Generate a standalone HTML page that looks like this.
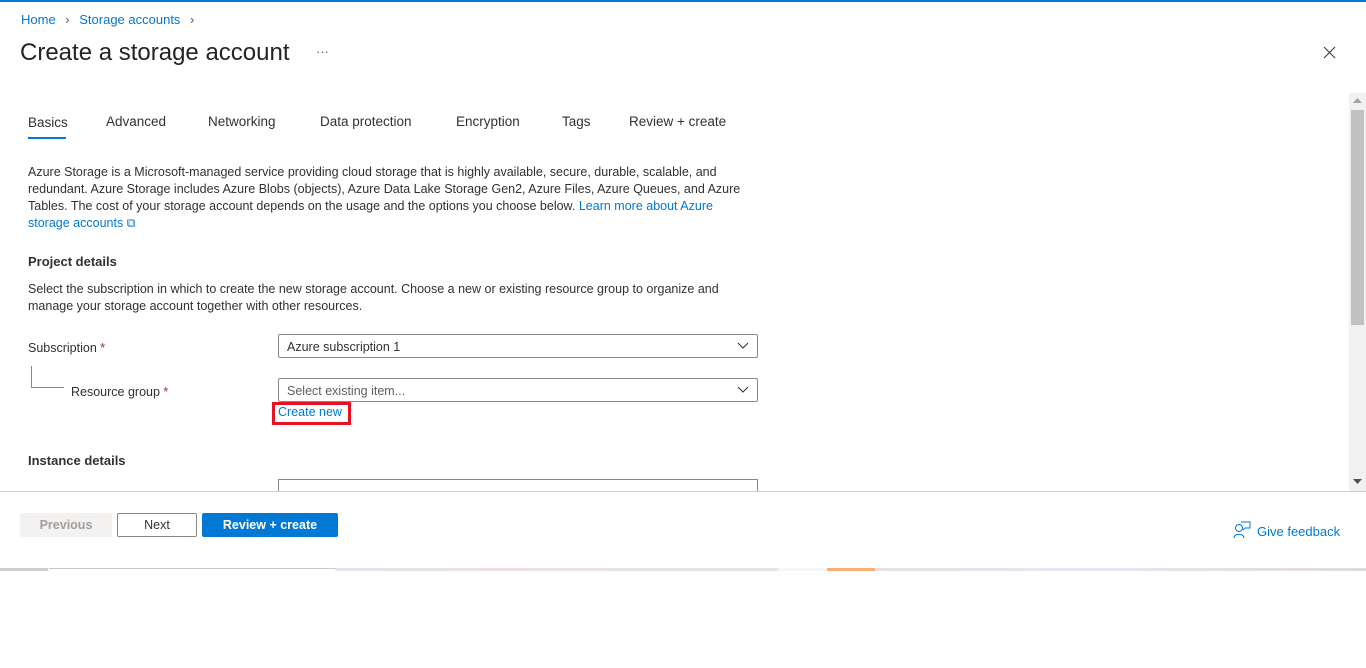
<!DOCTYPE html>
<html><head><meta charset="utf-8"><style>
*{box-sizing:border-box;margin:0;padding:0}
body{width:1366px;height:668px;background:#fff;font-family:"Liberation Sans",sans-serif;color:#323130;position:relative;overflow:hidden;font-size:12.5px}
.a{position:absolute;white-space:nowrap}
.link{color:#0078d4}
.p{line-height:17px;font-size:12.5px}
.sel{position:absolute;left:278px;width:480px;height:24px;border:1px solid #8a8886;border-radius:2px;padding:5px 8px;font-size:12.5px}
.sel svg{position:absolute;right:8px;top:7px}
h3{font-size:13px;font-weight:bold}
.t{font-size:13.5px;top:114px}
</style></head><body>
<div class="a" style="left:0;top:0;width:1366px;height:2px;background:#0078d4"></div>
<div class="a link" style="left:21px;top:12px;font-size:13px">Home <span style="color:#605e5c;margin:0 6px">›</span> Storage accounts <span style="color:#605e5c;margin-left:6px">›</span></div>
<div class="a" style="left:20px;top:39px;font-size:24px;color:#252423">Create a storage account</div>
<div class="a" style="left:316px;top:44px;font-size:13px;color:#605e5c">···</div>
<svg class="a" style="left:1323px;top:46px" width="13" height="13"><path d="M1 1L12 12M12 1L1 12" stroke="#444" stroke-width="1.2"/></svg>
<div class="a" style="left:28px;top:115px;font-size:13.5px;color:#323130">Basics</div>
<div class="a" style="left:28px;top:137px;width:38px;height:2px;background:#0078d4"></div>
<div class="a t" style="left:106px">Advanced</div>
<div class="a t" style="left:208px">Networking</div>
<div class="a t" style="left:320px">Data protection</div>
<div class="a t" style="left:456px">Encryption</div>
<div class="a t" style="left:562px">Tags</div>
<div class="a t" style="left:629px">Review + create</div>
<div class="a p" style="left:28px;top:164px;width:730px;white-space:normal">Azure Storage is a Microsoft-managed service providing cloud storage that is highly available, secure, durable, scalable, and redundant. Azure Storage includes Azure Blobs (objects), Azure Data Lake Storage Gen2, Azure Files, Azure Queues, and Azure Tables. The cost of your storage account depends on the usage and the options you choose below. <span class="link">Learn more about Azure storage accounts ⧉</span></div>
<h3 class="a" style="left:28px;top:254px">Project details</h3>
<div class="a p" style="left:28px;top:281px;width:735px;white-space:normal">Select the subscription in which to create the new storage account. Choose a new or existing resource group to organize and manage your storage account together with other resources.</div>
<div class="a" style="left:28px;top:341px">Subscription <span style="color:#a4262c">*</span></div>
<div class="sel" style="top:334px">Azure subscription 1<svg width="12" height="8"><path d="M1 1L6 6L11 1" fill="none" stroke="#323130"/></svg></div>
<div class="a" style="left:31px;top:366px;width:33px;height:22px;border-left:1px solid #8a8886;border-bottom:1px solid #8a8886"></div>
<div class="a" style="left:71px;top:385px">Resource group <span style="color:#a4262c">*</span></div>
<div class="sel" style="top:378px;color:#605e5c">Select existing item...<svg width="12" height="8"><path d="M1 1L6 6L11 1" fill="none" stroke="#323130"/></svg></div>
<div class="a" style="left:272px;top:402px;width:79px;height:23px;border:3px solid #e81123"></div>
<div class="a link" style="left:278px;top:405px">Create new</div>
<h3 class="a" style="left:28px;top:453px">Instance details</h3>
<div class="a" style="left:278px;top:479px;width:480px;height:14px;border:1px solid #8a8886;border-bottom:none"></div>
<div class="a" style="left:1349px;top:93px;width:17px;height:398px;background:#f1f1f1"></div>
<div class="a" style="left:1351px;top:110px;width:13px;height:215px;background:#c1c1c1"></div>
<svg class="a" style="left:1353px;top:98px" width="9" height="5"><path d="M0 5L4.5 0L9 5Z" fill="#a3a3a3"/></svg>
<svg class="a" style="left:1353px;top:479px" width="9" height="5"><path d="M0 0L4.5 5L9 0Z" fill="#505050"/></svg>
<div class="a" style="left:0;top:491px;width:1366px;height:78px;background:#fff;border-top:1px solid #d2d0ce"></div>
<div class="a" style="left:20px;top:513px;width:92px;height:24px;background:#f3f2f1;color:#a19f9d;font-weight:bold;text-align:center;line-height:24px">Previous</div>
<div class="a" style="left:117px;top:513px;width:80px;height:24px;border:1px solid #8a8886;border-radius:2px;text-align:center;line-height:22px">Next</div>
<div class="a" style="left:202px;top:513px;width:136px;height:24px;background:#0078d4;border-radius:2px;color:#fff;font-weight:bold;text-align:center;line-height:24px">Review + create</div>
<svg class="a" style="left:1233px;top:521px" width="18" height="18"><circle cx="6" cy="7" r="3.5" fill="none" stroke="#0078d4"/><path d="M1 17C1 12 11 12 11 17" fill="none" stroke="#0078d4"/><path d="M8 1H17V7H12L10 9" fill="none" stroke="#0078d4"/></svg>
<div class="a link" style="left:1257px;top:524px;font-size:13px">Give feedback</div>
<div class="a" style="left:0;top:568px;width:1366px;height:3px;background:linear-gradient(90deg,#d0d0d4 0 48px,#fff 48px 335px,#e2e4ef 335px,#ecdfde 500px,#e4e4ea 778px,#f6f6f6 778px 827px,#f7b07a 827px 875px,#e6e0e6 875px,#e4e8f4 1100px,#e5dcdc 1300px,#dcdcdc 1366px)"></div>
<div class="a" style="left:49px;top:568px;width:287px;height:2px;background:#fff;border-top:1px solid #c8c8c8"></div>
</body></html>
